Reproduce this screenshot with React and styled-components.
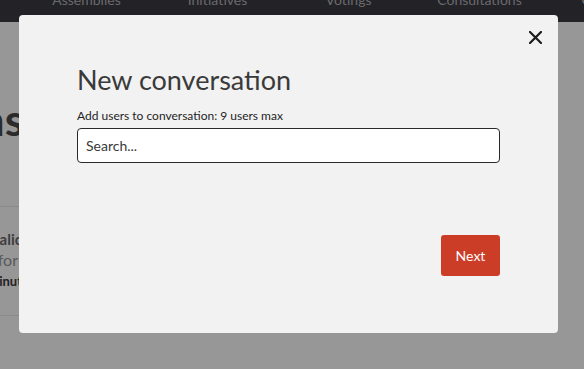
import React from "react";
import styled, { createGlobalStyle } from "styled-components";

const Global = createGlobalStyle`
  html, body { margin: 0; padding: 0; }
  body {
    width: 584px;
    height: 369px;
    overflow: hidden;
    font-family: "Source Sans Pro", "Lato", "Open Sans", sans-serif;
    background: #979797;
  }
`;

const Page = styled.div`
  position: relative;
  width: 584px;
  height: 369px;
  overflow: hidden;
  background: #979797;
`;

const TopBar = styled.nav`
  height: 22px;
  background: #232227;
  display: grid;
  grid-template-columns: repeat(4, 131px) 150px;
  justify-items: center;
  padding-left: 21px;
  overflow: hidden;
`;

const NavItem = styled.span`
  font-size: 14px;
  line-height: 14px;
  margin-top: -7px;
  color: #6a6a6e;
  white-space: nowrap;
`;

const Content = styled.div`
  width: 24px;
  display: flex;
  flex-direction: column;
`;

const Heading = styled.h1`
  margin: 75px 0 0;
  font-size: 44px;
  line-height: 44px;
  font-weight: 700;
  color: #2b2b2b;
  white-space: nowrap;
  display: flex;
  justify-content: flex-end;
`;

const Divider = styled.hr`
  margin: ${(p) => p.$top}px 0 0;
  width: 24px;
  border: 0;
  border-top: 1px solid #8a8a8a;
`;

const ListItem = styled.div`
  padding-top: 22px;
  display: flex;
  flex-direction: column;
  align-items: flex-start;
`;

const ItemLine = styled.span`
  display: flex;
  justify-content: flex-end;
  box-sizing: border-box;
  width: 22px;
  padding-right: ${(p) => p.$pad || 0}px;
  font-size: ${(p) => p.$size}px;
  line-height: ${(p) => p.$lh}px;
  font-weight: ${(p) => p.$weight};
  color: ${(p) => p.$color};
  white-space: nowrap;
`;

const Modal = styled.div`
  position: absolute;
  left: 19px;
  top: 15px;
  width: 539px;
  height: 318px;
  box-sizing: border-box;
  background: #f2f2f2;
  border-radius: 4px;
  padding: 50px 58px 0;
  display: flex;
  flex-direction: column;
`;

const Close = styled.button`
  position: absolute;
  top: 13px;
  right: 14px;
  width: 18px;
  height: 18px;
  padding: 0;
  border: 0;
  background: transparent;
  display: flex;
  align-items: center;
  justify-content: center;
  cursor: pointer;
`;

const Title = styled.h2`
  margin: 0;
  font-size: 27px;
  line-height: 30px;
  font-weight: 400;
  color: #3a3a3a;
`;

const Label = styled.label`
  margin-top: 14px;
  font-size: 12px;
  line-height: 14px;
  color: #1f1f1f;
`;

const SearchInput = styled.input`
  margin-top: 5px;
  box-sizing: border-box;
  width: 423px;
  height: 35px;
  padding: 0 8px;
  border: 1px solid #2a2a2e;
  border-radius: 4px;
  background: #fff;
  font-family: inherit;
  font-size: 14px;
  color: #333;
  outline: none;
  &::placeholder { color: #3a3a3a; }
`;

const Footer = styled.div`
  margin-top: 72px;
  width: 423px;
  display: flex;
  justify-content: flex-end;
`;

const NextButton = styled.button`
  width: 59px;
  height: 41px;
  border: 0;
  border-radius: 3px;
  background: #cc3d28;
  color: #fff;
  font-family: inherit;
  font-size: 14px;
  cursor: pointer;
`;

export default function App() {
  return (
    <>
      <Global />
      <Page>
        <TopBar>
          <NavItem>Assemblies</NavItem>
          <NavItem>Initiatives</NavItem>
          <NavItem>Votings</NavItem>
          <NavItem>Consultations</NavItem>
          <NavItem>Conferences</NavItem>
        </TopBar>
        <Content>
          <Heading>Conversations</Heading>
          <Divider $top={65} />
          <ListItem>
            <ItemLine $size={15} $lh={20} $weight={700} $color="#3e3e3e">Personalic</ItemLine>
            <ItemLine $size={16} $lh={22} $weight={400} $color="#5a5a5a" $pad={4}>Call for</ItemLine>
            <ItemLine $size={13} $lh={20} $weight={700} $color="#222">5 minut</ItemLine>
          </ListItem>
          <Divider $top={24} />
        </Content>
        <Modal role="dialog">
          <Close aria-label="Close">
            <svg width="13" height="13" viewBox="0 0 13 13">
              <path d="M1 1L12 12M12 1L1 12" stroke="#1c1c1c" strokeWidth="2.2" strokeLinecap="square" />
            </svg>
          </Close>
          <Title>New conversation</Title>
          <Label>Add users to conversation: 9 users max</Label>
          <SearchInput placeholder="Search..." />
          <Footer>
            <NextButton>Next</NextButton>
          </Footer>
        </Modal>
      </Page>
    </>
  );
}
